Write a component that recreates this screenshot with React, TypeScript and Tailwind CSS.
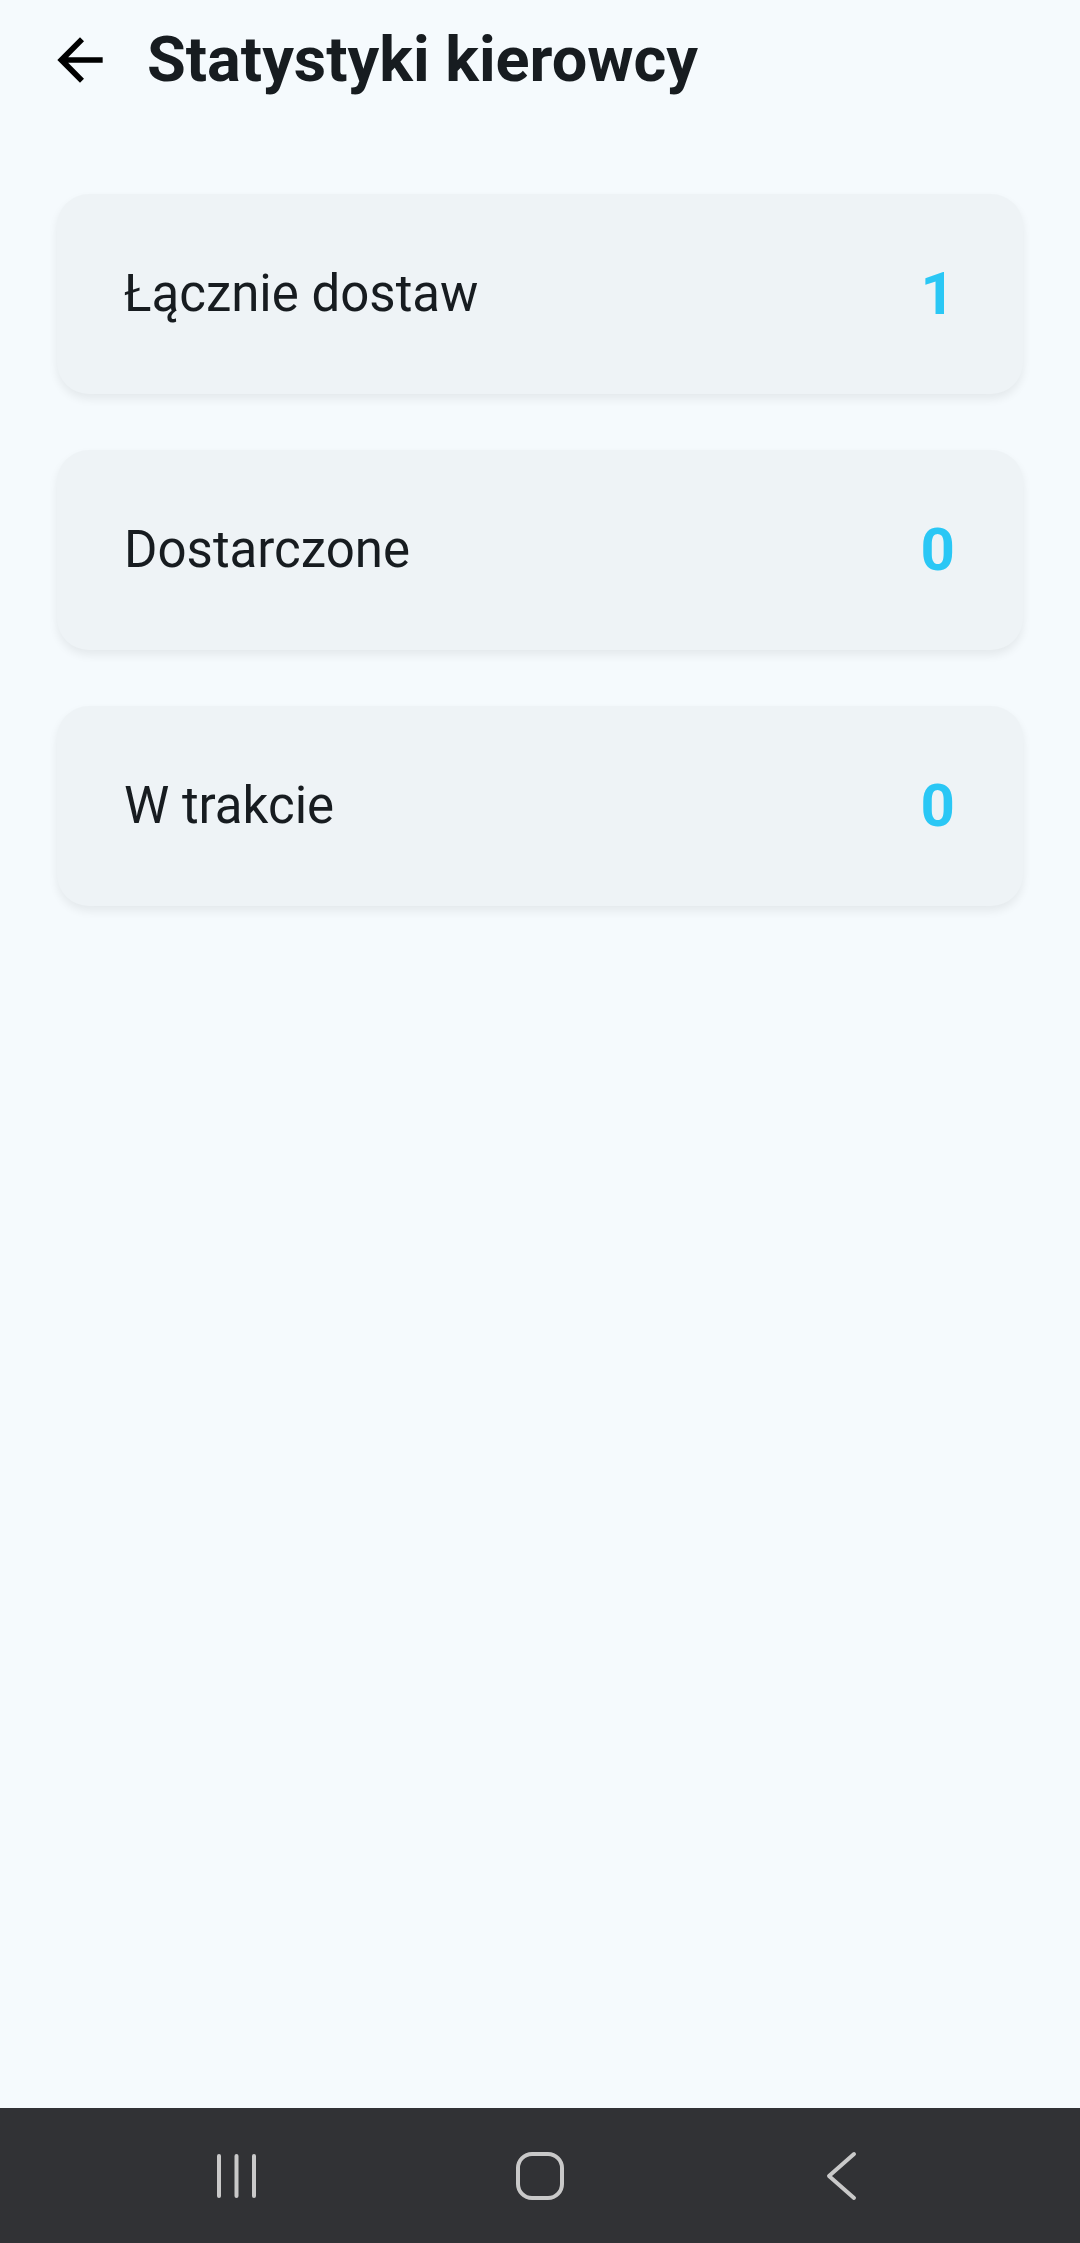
import React from "react";

const stats = [
  { label: "Łącznie dostaw", value: "1" },
  { label: "Dostarczone", value: "0" },
  { label: "W trakcie", value: "0" },
];

export default function App() {
  return (
    <div
      className="h-screen w-full flex flex-col bg-[#f5fafd] overflow-hidden"
      style={{ fontFamily: "Roboto, 'Noto Sans', sans-serif" }}
    >
      <div className="h-[120px] flex items-center pl-[46px] shrink-0">
        <svg width="68" height="68" viewBox="0 0 24 24" className="shrink-0">
          <path
            d="M20 11H7.83l5.59-5.59L12 4l-8 8 8 8 1.41-1.41L7.83 13H20v-2z"
            fill="#000000"
          />
        </svg>
        <div className="ml-[33px] text-[63px] font-bold text-[#171c20]">
          Statystyki kierowcy
        </div>
      </div>

      <div className="flex flex-col gap-[56px] px-[57px] mt-[74px]">
        {stats.map((s) => (
          <div
            key={s.label}
            className="h-[200px] rounded-[32px] bg-[#eef3f6] flex items-center justify-between pl-[67px] pr-[68px] shadow-[0_5px_10px_rgba(0,0,0,0.07)]"
          >
            <span className="text-[51px] text-[#171c20]">{s.label}</span>
            <span className="text-[60px] font-bold text-[#2ac7f5]">{s.value}</span>
          </div>
        ))}
      </div>

      <div className="flex-1" />

      <div className="h-[135px] shrink-0 bg-[#313235] flex items-center justify-center gap-[244px]">
        <svg width="60" height="60" viewBox="0 0 60 60" className="shrink-0">
          <g stroke="#c9c9c9" strokeWidth="4" strokeLinecap="round">
            <line x1="13" y1="10" x2="13" y2="50" />
            <line x1="30.5" y1="10" x2="30.5" y2="50" />
            <line x1="48" y1="10" x2="48" y2="50" />
          </g>
        </svg>
        <svg width="60" height="60" viewBox="0 0 60 60" className="shrink-0">
          <rect x="8" y="8" width="44" height="44" rx="14" fill="none" stroke="#c9c9c9" strokeWidth="4" />
        </svg>
        <svg width="60" height="60" viewBox="0 0 60 60" className="shrink-0">
          <polyline points="40,8 15,30 40,52" fill="none" stroke="#c9c9c9" strokeWidth="4" strokeLinecap="round" strokeLinejoin="round" />
        </svg>
      </div>
    </div>
  );
}
